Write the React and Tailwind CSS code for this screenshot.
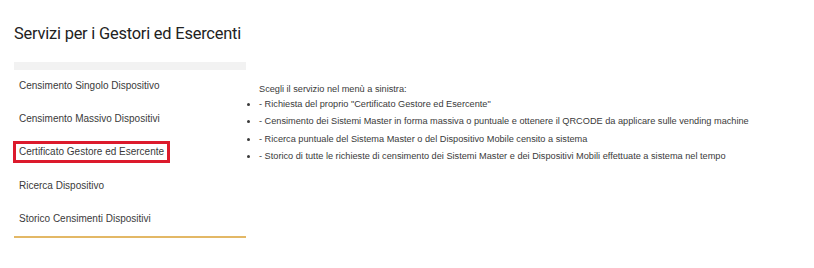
export default function App() {
  const menu = [
    'Censimento Singolo Dispositivo',
    'Censimento Massivo Dispositivi',
    'Certificato Gestore ed Esercente',
    'Ricerca Dispositivo',
    'Storico Censimenti Dispositivi',
  ];
  const items = [
    '- Richiesta del proprio "Certificato Gestore ed Esercente"',
    '- Censimento dei Sistemi Master in forma massiva o puntuale e ottenere il QRCODE da applicare sulle vending machine',
    '- Ricerca puntuale del Sistema Master o del Dispositivo Mobile censito a sistema',
    '- Storico di tutte le richieste di censimento dei Sistemi Master e dei Dispositivi Mobili effettuate a sistema nel tempo',
  ];

  return (
    <div className="w-[814px] h-[268px] bg-white overflow-hidden px-[14px] pt-[24px]">
      <h1 className="font-['Roboto',sans-serif] text-[16.4px] leading-[20px] text-[#222] tracking-[-0.2px]">
        Servizi per i Gestori ed Esercenti
      </h1>

      <div className="flex mt-[18px]">
        <div className="w-[232px]">
          <div className="h-[8px] bg-[#f2f2f2]" />
          <ul className="mt-[-1px] font-['Liberation_Sans',Arial,sans-serif] text-[10px] text-[#3a3a3a]">
            {menu.map((m, i) => (
              <li key={m} className="h-[33.25px] flex items-center">
                <span
                  className={
                    i === 2
                      ? 'ml-[-1px] px-[3px] py-[2px] border-[3px] border-[#dc1a2c] leading-[12px]'
                      : 'ml-[5px] leading-[13px]'
                  }
                >
                  {m}
                </span>
              </li>
            ))}
          </ul>
          <div className="h-[2px] bg-[#e3b866] mt-[1px]" />
        </div>

        <div className="pt-[20px] pl-[2px] font-['Liberation_Sans',Arial,sans-serif] text-[9.2px] text-[#3a3a3a]">
          <p className="pl-[11px] leading-[14px]">Scegli il servizio nel menù a sinistra:</p>
          <ul className="list-disc pl-[11px]">
            {items.map((t) => (
              <li key={t} className="leading-[17.3px]">
                {t}
              </li>
            ))}
          </ul>
        </div>
      </div>
    </div>
  );
}
